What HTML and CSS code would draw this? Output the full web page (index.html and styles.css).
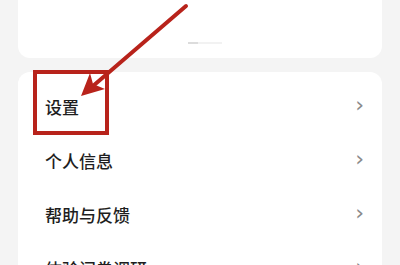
FILE: index.html
```html
<!DOCTYPE html>
<html lang="zh-CN">
<head>
  <meta charset="UTF-8">
  <meta name="viewport" content="width=device-width, initial-scale=1.0">
  <title>我的</title>
  <link rel="stylesheet" href="styles.css">
</head>
<body>
  <div class="page">
    <!-- top card, mostly scrolled away -->
    <div class="card card-top">
      <span class="dots"></span>
    </div>

    <!-- menu list -->
    <ul class="card menu">
      <li class="row"><span>设置</span><span class="chev">&#8250;</span></li>
      <li class="row"><span>个人信息</span><span class="chev">&#8250;</span></li>
      <li class="row"><span>帮助与反馈</span><span class="chev">&#8250;</span></li>
      <li class="row"><span>体验问卷调研</span><span class="chev">&#8250;</span></li>
    </ul>
  </div>

  <!-- annotation drawn over the screenshot -->
  <svg class="mark" width="400" height="265" viewBox="0 0 400 265">
    <rect x="35" y="72" width="72" height="61" fill="none" stroke="#b8231b" stroke-width="4"/>
    <line x1="186" y1="6" x2="86" y2="92" stroke="#b8231b" stroke-width="4" stroke-linecap="round"/>
    <polygon points="81,96 90,73 93,84 105,89" fill="#b8231b"/>
  </svg>
</body>
</html>
```

FILE: styles.css
```css
body {
  margin: 0;
  padding: 0;
  background: #f4f4f4;
  font-family: "Noto Sans CJK SC", "Noto Sans", sans-serif;
  color: #1e1e1e;
  overflow: hidden;
}
.page {
  padding: 0 18px;
}
.card {
  background: #fff;
  border-radius: 12px;
}
.card-top {
  height: 58px;
  border-radius: 0 0 12px 12px;
  position: relative;
}
.dots {
  position: absolute;
  left: 170px;
  top: 42px;
  width: 34px;
  height: 2px;
  background: linear-gradient(to right, #dcdcdc 30%, #f2f2f2 30%);
}
.menu {
  list-style: none;
  margin: 14px 0 0;
  padding: 7px 0 0;
  height: 200px;
}
.row {
  height: 54px;
  display: flex;
  align-items: center;
  justify-content: space-between;
  padding: 0 18px 0 27px;
  font-size: 17px;
  font-weight: 500;
}
.chev {
  color: #8a8a8a;
  font-family: "DejaVu Sans", sans-serif;
  font-size: 22px;
  font-weight: normal;
  line-height: 1;
  margin-top: -3px;
}
.mark {
  position: absolute;
  left: 0;
  top: 0;
}
```
